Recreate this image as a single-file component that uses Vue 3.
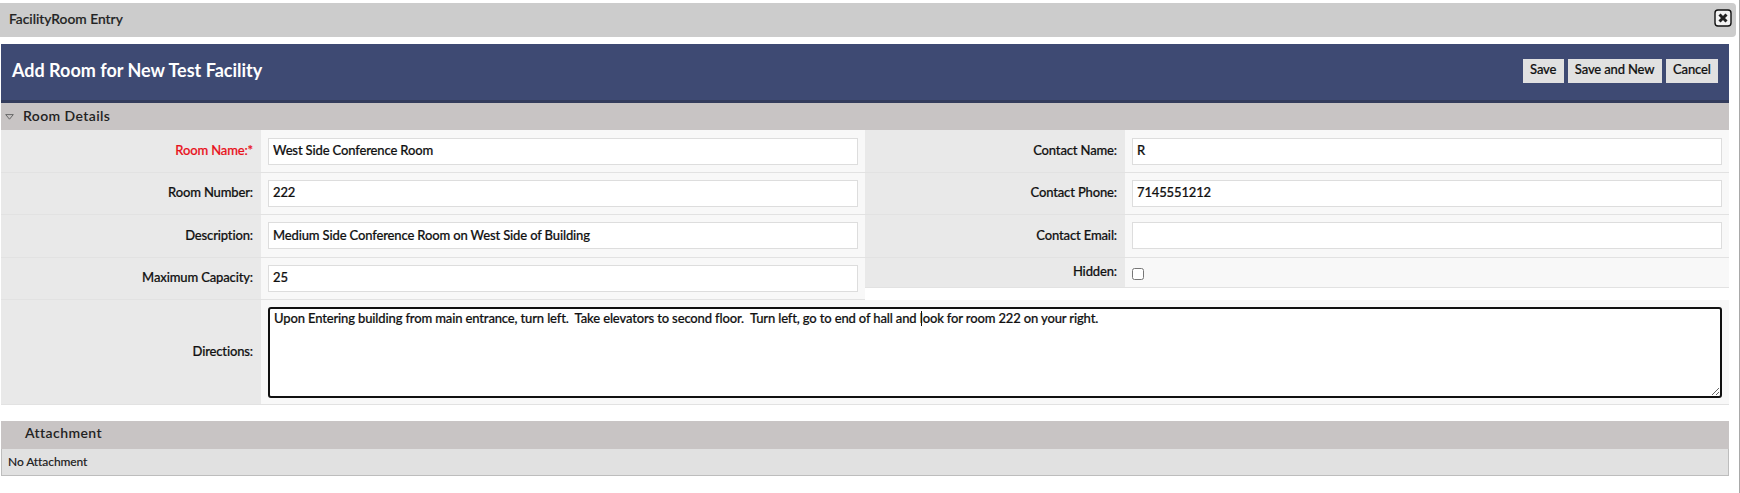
<script setup>
import { ref } from 'vue'

const filasIzq = ref([
  { label: 'Room Name:*', valor: 'West Side Conference Room', requerido: true },
  { label: 'Room Number:', valor: '222' },
  { label: 'Description:', valor: 'Medium Side Conference Room on West Side of Building' },
  { label: 'Maximum Capacity:', valor: '25' }
])

const filasDer = ref([
  { label: 'Contact Name:', valor: 'R' },
  { label: 'Contact Phone:', valor: '7145551212' },
  { label: 'Contact Email:', valor: '' }
])

const hidden = ref(false)
const direcciones = ref('Upon Entering building from main entrance, turn left.  Take elevators to second floor.  Turn left, go to end of hall and look for room 222 on your right.')
</script>

<template>
  <div class="page">
    <div class="dialog-title">
      <span>FacilityRoom Entry</span>
      <button class="close-btn" aria-label="Close">
        <svg width="18" height="18" viewBox="0 0 18 18">
          <rect x="1" y="1" width="16" height="16" rx="3" fill="#f4f4f4" stroke="#111" stroke-width="1.4" />
          <path d="M5.5 5.5 L12.5 12.5 M12.5 5.5 L5.5 12.5" stroke="#222" stroke-width="3" />
        </svg>
      </button>
    </div>

    <div class="content">
      <div class="header">
        <h1>Add Room for New Test Facility</h1>
        <div class="actions">
          <button>Save</button>
          <button>Save and New</button>
          <button>Cancel</button>
        </div>
      </div>

      <div class="section-bar details-bar">
        <svg class="toggle" width="9" height="6" viewBox="0 0 9 6">
          <path d="M0.7 0.6 H8.3 L4.5 5.2 Z" fill="none" stroke="#666" stroke-width="1" />
        </svg>
        <span>Room Details</span>
      </div>

      <div class="columns">
        <div class="col">
          <div v-for="fila in filasIzq" :key="fila.label" class="row">
            <label :class="{ required: fila.requerido }">{{ fila.label }}</label>
            <div class="field"><input v-model="fila.valor" type="text" /></div>
          </div>
        </div>
        <div class="col">
          <div v-for="fila in filasDer" :key="fila.label" class="row">
            <label>{{ fila.label }}</label>
            <div class="field"><input v-model="fila.valor" type="text" /></div>
          </div>
          <div class="row row-check">
            <label>Hidden:</label>
            <div class="field"><input v-model="hidden" type="checkbox" /></div>
          </div>
        </div>
      </div>

      <div class="row row-area">
        <label>Directions:</label>
        <div class="field">
          <textarea v-model="direcciones"></textarea>
          <!-- cursor de texto dentro del textarea -->
          <span class="caret"></span>
        </div>
      </div>

      <div class="section-bar attachment-bar">Attachment</div>
      <div class="attachment-body">No Attachment</div>
    </div>
  </div>
</template>

<style scoped>
.page {
  width: 1740px;
  height: 493px;
  box-sizing: border-box;
  padding-top: 3px;
  border-right: 1px solid #a8a8a8;
  overflow: hidden;
  font-family: Lato, "Liberation Sans", sans-serif;
  font-size: 13px;
  font-weight: 500;
  letter-spacing: -0.14px;
  -webkit-text-stroke: 0.2px;
  color: #111;
  background: #fff;
}

.dialog-title {
  width: 1736px;
  height: 34px;
  box-sizing: border-box;
  padding: 0 4px 0 9px;
  display: flex;
  align-items: center;
  justify-content: space-between;
  background: #cccccc;
  border-radius: 0 4px 4px 0;
  color: #222;
  font-size: 13.8px;
  letter-spacing: 0;
}

.dialog-title span {
  margin-bottom: 4px;
}

.close-btn {
  padding: 0;
  width: 18px;
  height: 18px;
  margin-bottom: 4px;
  border: none;
  background: none;
  display: flex;
}

.content {
  width: 1728px;
  margin: 7px 0 0 1px;
}

.header {
  height: 59px;
  box-sizing: border-box;
  padding: 0 11px 0 11px;
  display: flex;
  align-items: center;
  justify-content: space-between;
  background: #3e4a73;
  border-bottom: 3px solid #333c5c;
}

.header h1 {
  margin: 0 0 4px;
  font-size: 18px;
  font-weight: 700;
  letter-spacing: 0;
  -webkit-text-stroke: 0;
  color: #fff;
}

.actions {
  display: flex;
  gap: 4px;
  margin-top: -3px;
}

.actions button {
  height: 24px;
  padding: 0 7.3px 3px;
  border: none;
  background: #e1e1e1;
  font: inherit;
  letter-spacing: inherit;
  color: #111;
}

.section-bar {
  height: 27px;
  display: flex;
  align-items: center;
  background: #c8c4c4;
  font-weight: 600;
  font-size: 14px;
  letter-spacing: 0.4px;
  -webkit-text-stroke: 0;
  color: #222;
}

.details-bar span {
  margin-bottom: 2px;
}

.toggle {
  margin: 0 9px 0 4px;
}

.columns {
  display: grid;
  grid-template-columns: 864px 864px;
}

.row {
  display: grid;
  grid-template-columns: 260px 1fr;
  height: 42px;
  box-sizing: border-box;
  border-bottom: 1px solid #e2e2e2;
}

.col .row:nth-child(odd) {
  height: 43px;
}

.col .row:nth-child(3) .field {
  padding-bottom: 1px;
}

.row label {
  display: flex;
  align-items: center;
  justify-content: flex-end;
  padding: 0 8px 2px 0;
  background: #e9e9e9;
}

.col .row:nth-child(even):not(.row-check) label {
  padding-bottom: 4px;
}

.row label.required {
  color: #e8111b;
}

.field {
  position: relative;
  display: flex;
  align-items: center;
  padding: 0 7px;
  background: #f8f8f8;
}

.field input[type="text"] {
  width: 100%;
  height: 27px;
  box-sizing: border-box;
  padding: 0 5px 2px 4px;
  border: 1px solid #dddddd;
  background: #fff;
  font: inherit;
  letter-spacing: inherit;
  color: #111;
  outline: none;
}

.col .row:nth-child(even) .field input[type="text"] {
  padding-bottom: 4px;
}

.row-check {
  height: 30px;
}

.row-check label {
  padding-bottom: 3px;
}

.field input[type="checkbox"] {
  width: 12px;
  height: 12px;
  margin: 3px 0 0;
}

.row-area {
  height: 105px;
}

.row-area textarea {
  display: block;
  width: 100%;
  height: 91px;
  box-sizing: border-box;
  padding: 1px 4px;
  border: 2px solid #111;
  border-radius: 3px;
  background: #fff;
  font: inherit;
  letter-spacing: inherit;
  color: #111;
  outline: none;
}

.caret {
  position: absolute;
  left: 660px;
  top: 11px;
  width: 1px;
  height: 15px;
  background: #111;
}

.attachment-bar {
  margin-top: 16px;
  height: 28px;
  padding-left: 24px;
  padding-bottom: 5px;
  box-sizing: border-box;
}

.attachment-body {
  height: 27px;
  box-sizing: border-box;
  padding: 0 0 2px 6px;
  display: flex;
  align-items: center;
  background: #e1e1e1;
  border: 1px solid #bdbdbd;
  border-top: none;
  font-size: 12px;
  letter-spacing: -0.1px;
  -webkit-text-stroke: 0.1px;
  color: #222;
}
</style>

<style>
html, body {
  margin: 0;
  background: #fff;
  overflow: hidden;
}
</style>
